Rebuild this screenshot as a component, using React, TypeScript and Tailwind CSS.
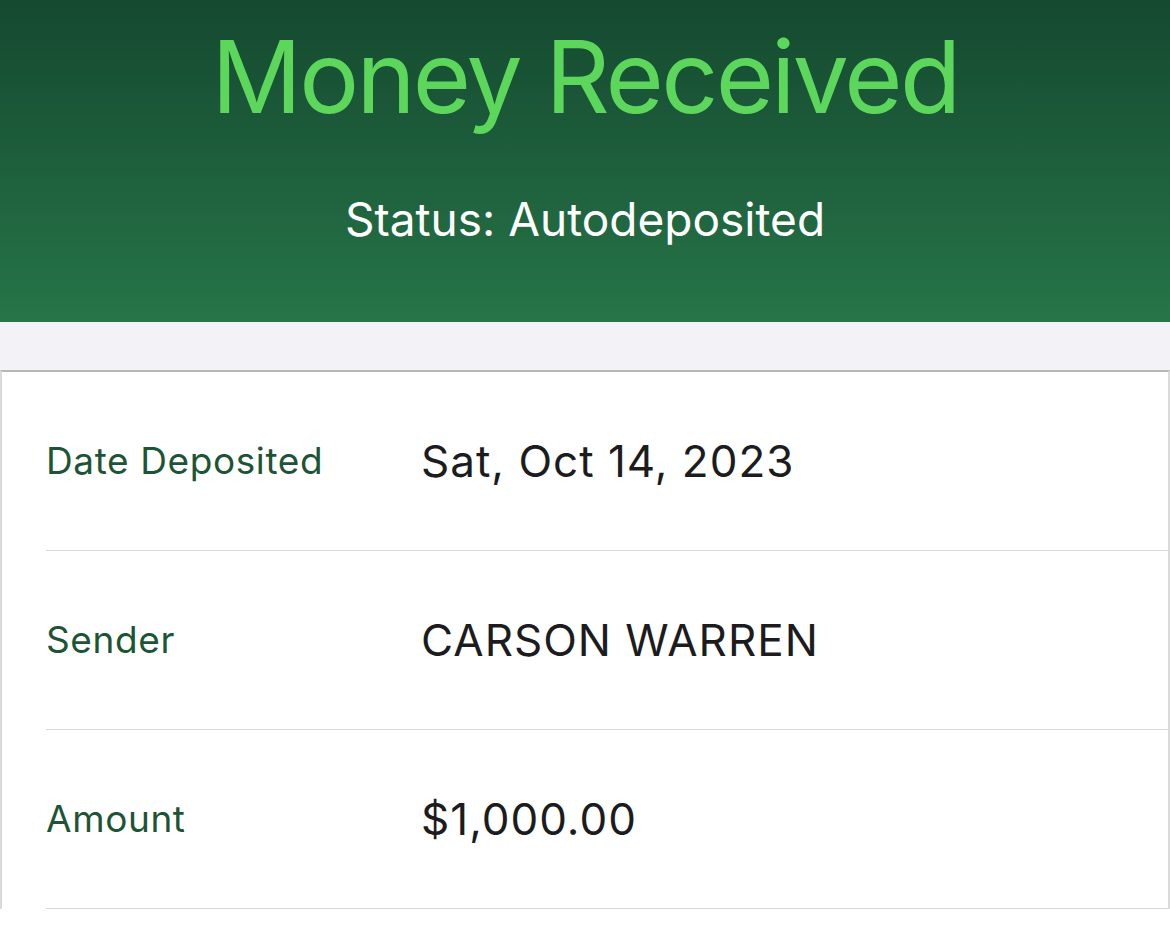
const rows = [
  { label: "Date Deposited", value: "Sat, Oct 14, 2023" },
  { label: "Sender", value: "CARSON WARREN" },
  { label: "Amount", value: "$1,000.00" },
];

export default function App() {
  return (
    <div className="h-[926px] w-[1170px] overflow-hidden bg-white font-['Inter',sans-serif]">
      {/* Header */}
      <div className="flex h-[322px] flex-col items-center bg-gradient-to-b from-[#154930] to-[#267548]">
        <h1 className="mt-[17px] text-[100px] leading-[120px] font-normal tracking-[-2.7px] text-[#5cd65b]">
          Money Received
        </h1>
        <p className="mt-[54px] text-[46px] leading-[56px] text-white">
          Status: Autodeposited
        </p>
      </div>

      {/* Spacer band */}
      <div className="h-[48px] bg-[#f2f2f7]" />

      {/* Details card */}
      <div className="border-t-2 border-l-2 border-r-2 border-t-[#b8b8b8] border-l-[#dadada] border-r-[#dadada] bg-white">
        {rows.map((row) => (
          <div key={row.label} className="pl-[44px]">
            <div className="flex h-[179px] items-center border-b border-[#d9d9d9]">
              <div className="w-[375px] text-[37px] tracking-[0.6px] text-[#1e5436]">
                {row.label}
              </div>
              <div className="text-[44px] tracking-[1px] text-[#1c1c1e]">
                {row.value}
              </div>
            </div>
          </div>
        ))}
      </div>
    </div>
  );
}
